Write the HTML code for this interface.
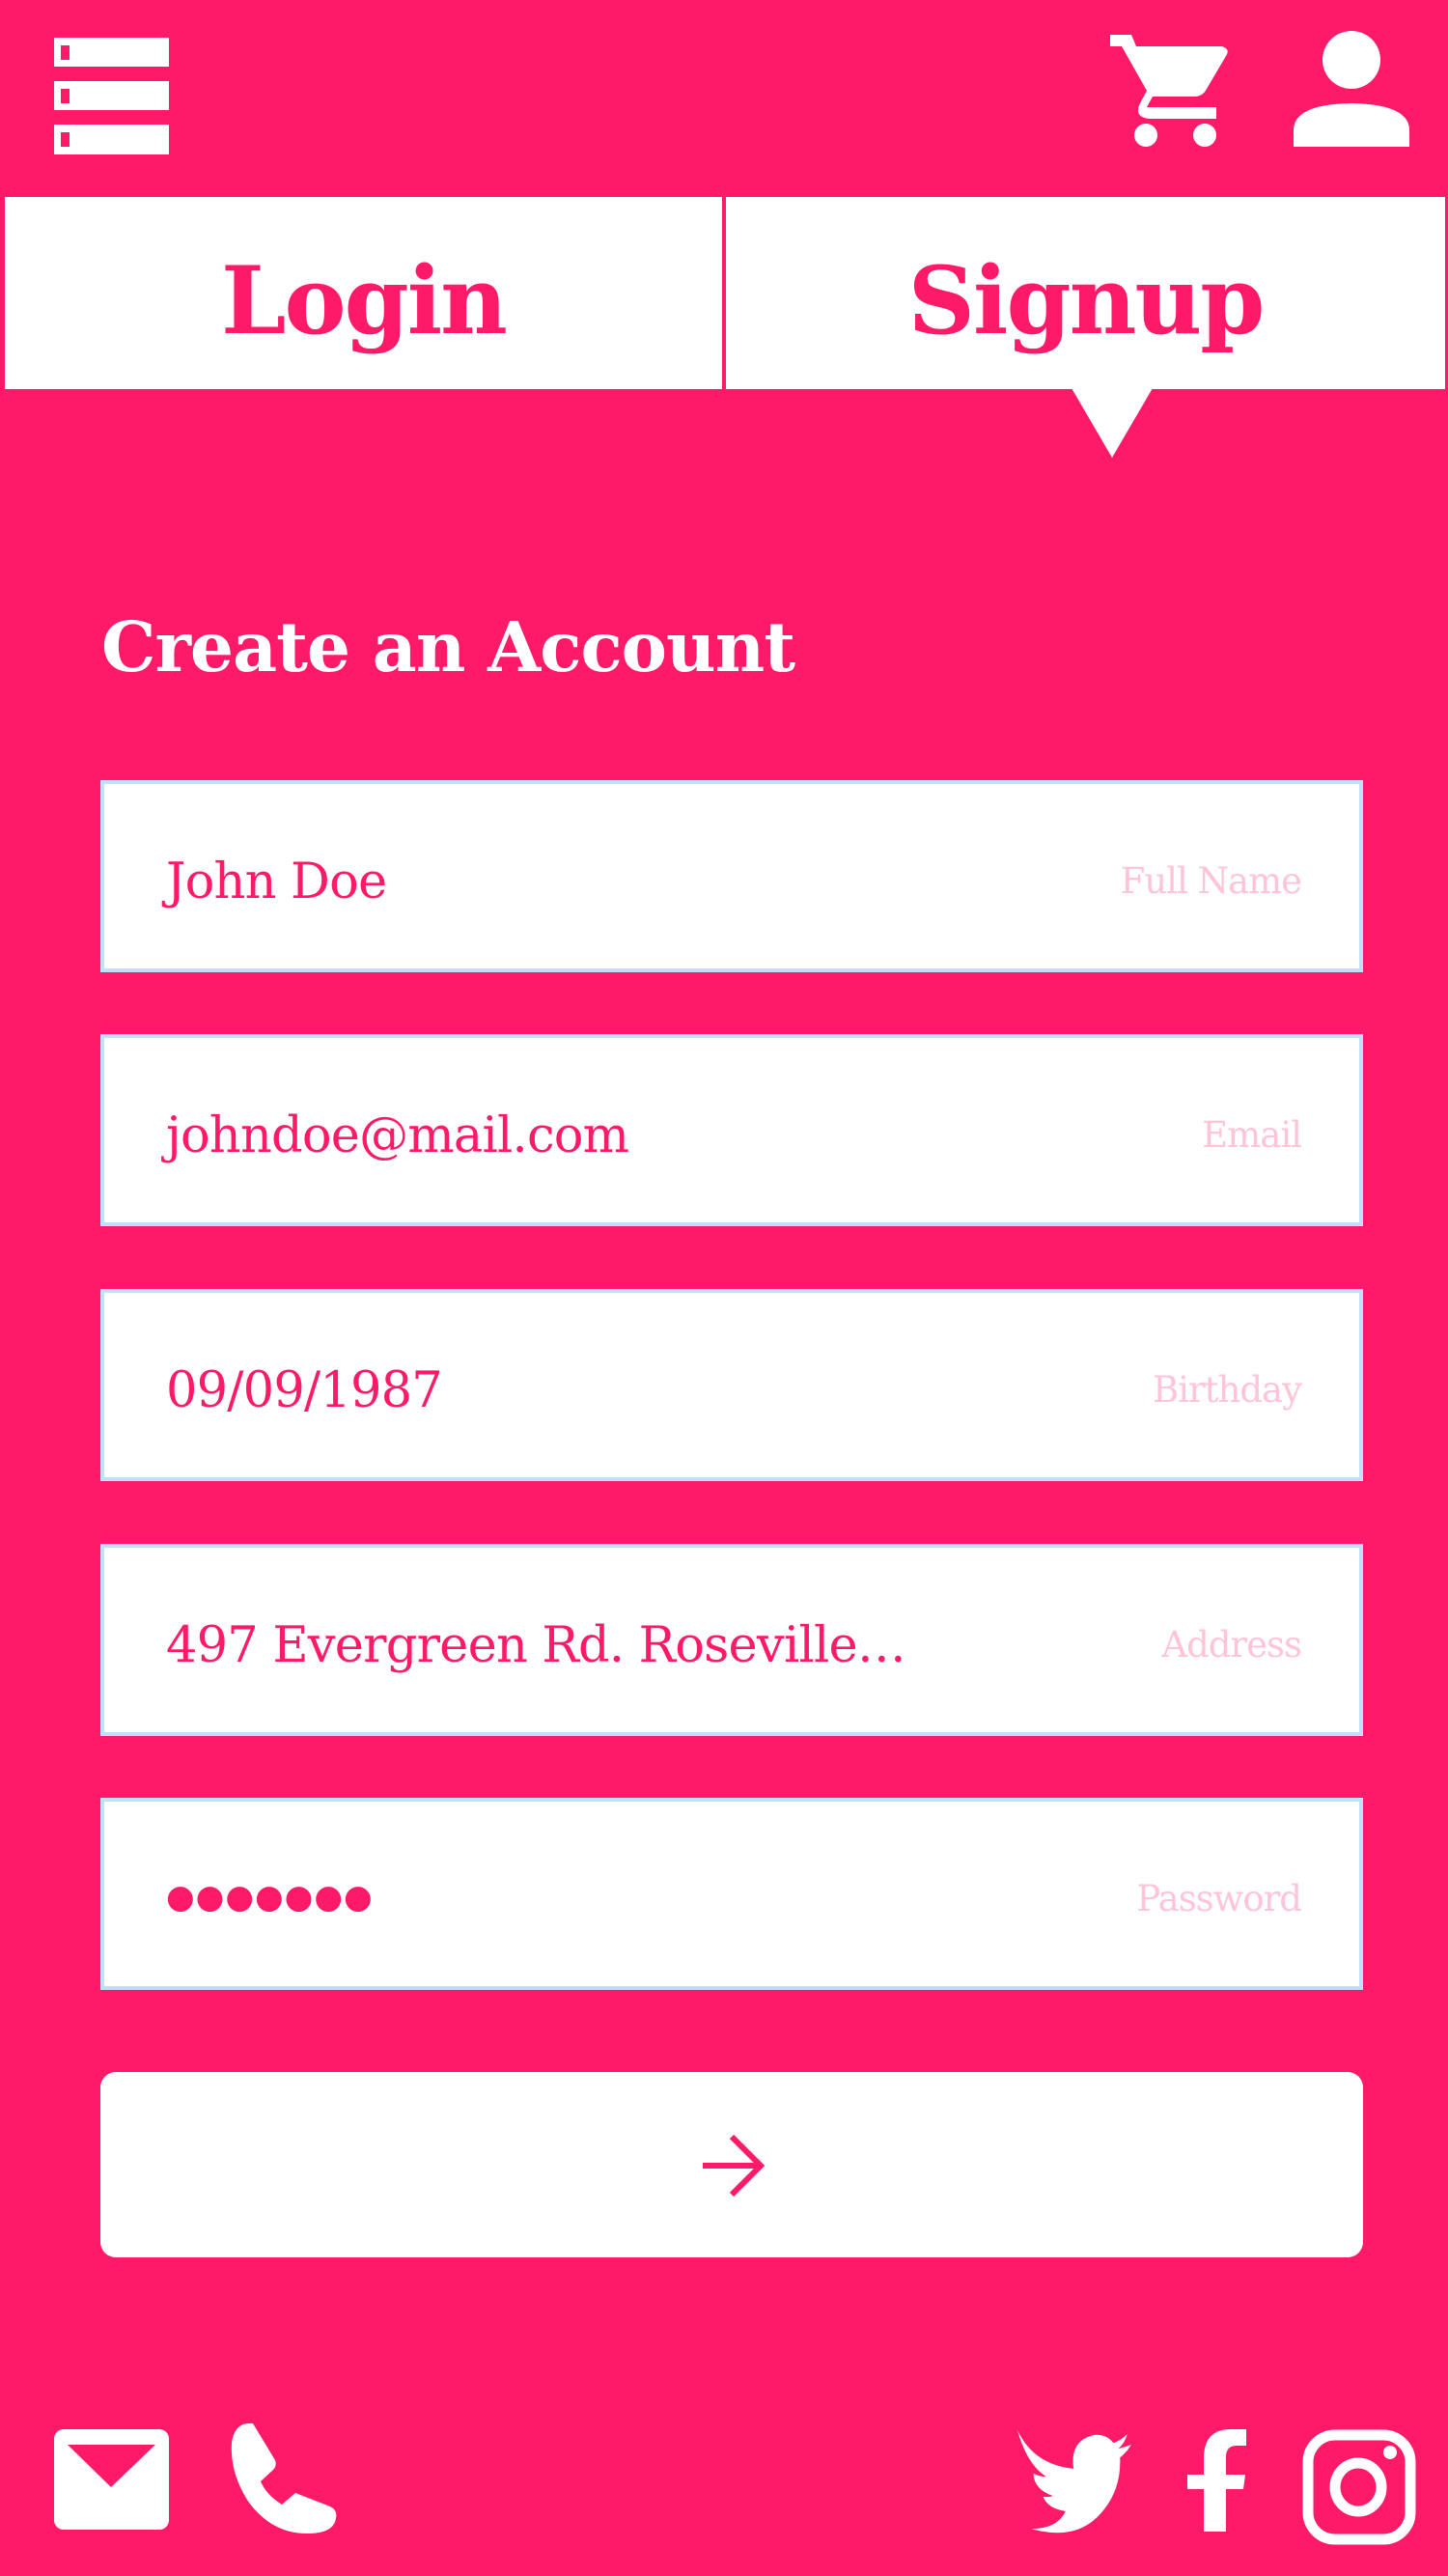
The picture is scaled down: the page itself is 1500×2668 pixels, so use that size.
<!DOCTYPE html>
<html><head><meta charset="utf-8"><style>
*{margin:0;padding:0;box-sizing:border-box}
body{width:1500px;height:2668px;background:#ff1a69;position:relative;overflow:hidden;font-family:"DejaVu Serif","Liberation Serif",serif}
.a{position:absolute}
.tab{position:absolute;top:204px;height:199px;background:#fff;color:#ff1a69;font-weight:bold;font-size:96px;text-align:center;line-height:215px;letter-spacing:-2px}
.inp{position:absolute;left:104px;width:1308px;height:199px;background:#fff;border:4px solid #c0e0fa}
.v{position:absolute;left:64px;top:0;line-height:203px;font-size:51px;color:#ff1a69;letter-spacing:-0.8px}
.l{position:absolute;right:60px;top:0;line-height:201px;font-size:37px;color:#ffc4da;letter-spacing:-1px}
</style></head><body>
<svg class="a" style="left:0;top:0" width="1500" height="204">
<g fill="#fff"><rect x="56" y="39" width="119" height="30"/><rect x="56" y="84" width="119" height="30"/><rect x="56" y="129" width="119" height="31"/></g>
<g fill="#ff1a69"><rect x="63" y="47" width="9" height="15"/><rect x="63" y="92" width="9" height="15"/><rect x="63" y="137" width="9" height="15"/></g>
<path fill="#fff" d="M1150 36H1172L1177 48H1265Q1275 50 1270 58L1250 92Q1246 100 1237 100H1194L1188 111H1260V123H1190Q1174 121 1181 107L1188 94L1162 48H1150Z"/>
<circle fill="#fff" cx="1187" cy="140" r="12"/><circle fill="#fff" cx="1248" cy="140" r="12"/>
<circle fill="#fff" cx="1400" cy="62" r="30"/>
<path fill="#fff" d="M1340 152V135Q1340 108 1400 107Q1460 108 1460 135V152Z"/>
</svg>
<div class="tab" style="left:5px;width:743px">Login</div>
<div class="tab" style="left:752px;width:745px">Signup</div>
<svg class="a" style="left:1108px;top:402px" width="88" height="74"><path fill="#fff" d="M2 0H86L44 72Z"/></svg>
<div class="a" style="left:105px;top:620px;font-size:71px;font-weight:bold;color:#fff;letter-spacing:-1px;line-height:100px">Create an Account</div>
<div class="inp" style="top:808px"><span class="v">John Doe</span><span class="l">Full Name</span></div>
<div class="inp" style="top:1071px"><span class="v">johndoe@mail.com</span><span class="l">Email</span></div>
<div class="inp" style="top:1335px"><span class="v">09/09/1987</span><span class="l">Birthday</span></div>
<div class="inp" style="top:1599px"><span class="v">497 Evergreen Rd. Roseville…</span><span class="l">Address</span></div>
<div class="inp" style="top:1862px"><span class="v" style="font-family:'DejaVu Sans',sans-serif;font-size:34px;letter-spacing:1px;line-height:199px">●●●●●●●</span><span class="l">Password</span></div>
<div class="a" style="left:104px;top:2146px;width:1308px;height:192px;background:#fff;border-radius:16px"></div>
<svg class="a" style="left:720px;top:2208px" width="80" height="70"><path d="M8 35H68M38 5L68 35L38 65" stroke="#ff1a69" stroke-width="6" fill="none"/></svg>
<svg class="a" style="left:0;top:2490px" width="1500" height="178">
<rect fill="#fff" x="56" y="26" width="119" height="104" rx="10"/>
<path fill="#ff1a69" d="M70 42H161L115 86Z"/>
<path fill="#fff" d="M262 20Q243 18 240 40Q238 72 258 102Q282 134 318 134Q346 134 348 118Q350 110 342 106L306 92L292 104Q276 94 270 80L283 68Q287 64 285 58Z"/>
<g transform="translate(1054,27) scale(0.83) translate(-1060,-32)">
<path fill="#fff" d="M1060 32Q1080 75 1130 80Q1125 45 1155 38Q1170 36 1180 48Q1190 44 1197 37Q1194 48 1186 55Q1194 53 1202 50Q1196 60 1188 66Q1190 110 1160 140Q1130 170 1077 155Q1110 155 1120 133Q1098 130 1092 115Q1100 116 1104 114Q1080 105 1080 86Q1088 90 1096 90Q1072 75 1060 32Z"/>
</g>
<path fill="#fff" d="M1247 132V88H1230V73H1247V56Q1247 26 1275 26H1291V43H1281Q1270 43 1270 55V73H1290L1288 88H1270V132Z"/>
<rect x="1355" y="32" width="106" height="108" rx="28" fill="none" stroke="#fff" stroke-width="11"/>
<ellipse cx="1407" cy="86" rx="24" ry="25" fill="none" stroke="#fff" stroke-width="11"/>
<circle cx="1440" cy="50" r="7" fill="#fff"/>
</svg>
</body></html>
